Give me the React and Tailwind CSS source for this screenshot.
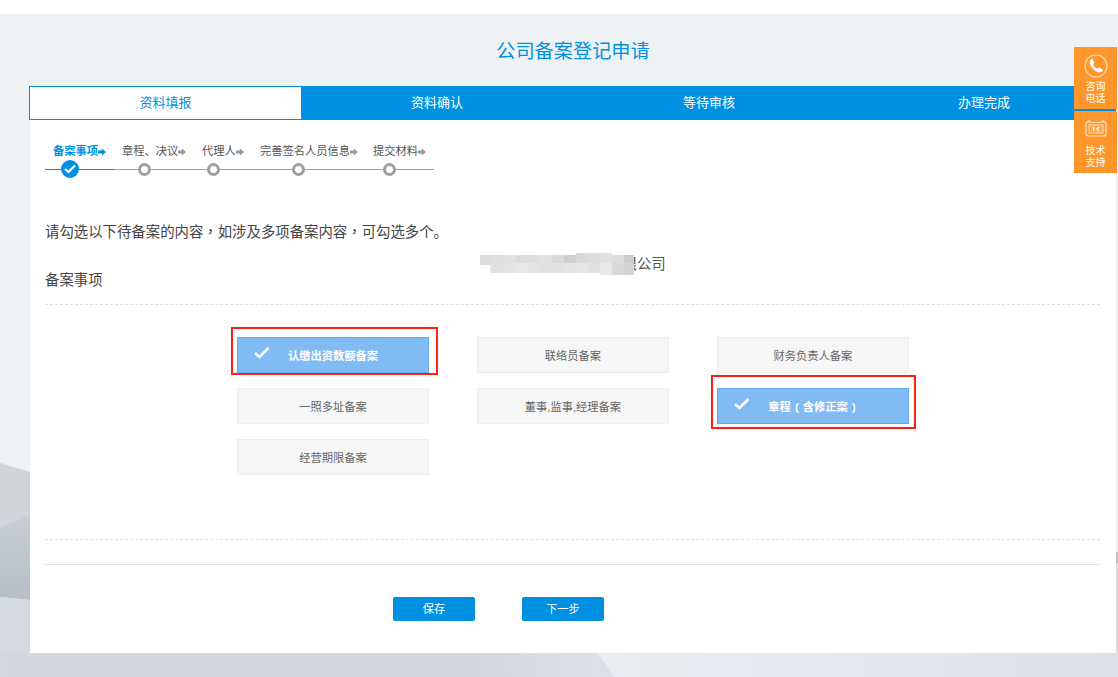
import React from "react";

const FONT = "font-['Liberation_Sans','Noto_Sans_CJK_SC',sans-serif]";

function Arrow({ active }) {
  return (
    <svg width="8" height="8" viewBox="0 0 8 8" className="shrink-0 mt-[2px]">
      <path d="M0 2.600h3.800V.6L8 4 3.800 7.400V5.400H0z" fill={active ? "#0090e2" : "#9a9a9a"} />
    </svg>
  );
}

function StepLabel({ text, active, className }) {
  return (
    <div className={`flex items-center text-[11.25px] leading-[14px] ${active ? "text-[#0090e2] font-bold" : "text-[#555]"} ${className}`}>
      {text}
      <Arrow active={active} />
    </div>
  );
}

function Node() {
  return <span className="block w-[13px] h-[13px] rounded-full border-[3px] border-[#9f9f9f] bg-white shrink-0" />;
}

function Line({ className }) {
  return <span className={`block h-px ${className}`} />;
}

function Check({ className }) {
  return (
    <svg width="16" height="12" viewBox="0 0 16 12" className={className}>
      <path d="M1 6 5.500 10 14.500 1" fill="none" stroke="#fff" strokeWidth="2.6" />
    </svg>
  );
}

function Item({ text, selected, redClass, textClass }) {
  if (selected) {
    return (
      <div className="relative flex items-center justify-center h-[36px] w-[192px] pt-[2px] bg-[#81bbf4] border border-[#62aaf0] text-[11.25px] font-bold text-white">
        <Check className="absolute left-[16px] top-[9px]" />
        <span className={textClass}>{text}</span>
        <span className={`absolute border-2 border-[#ff2015] ${redClass}`} />
      </div>
    );
  }
  return (
    <div className="flex items-center justify-center h-[36px] w-[192px] pt-[2px] bg-[#f6f6f6] border border-[#eeeeee] text-[11.25px] text-[#666]">
      {text}
    </div>
  );
}

const MOSAIC_TOP = ["#dcdcdc", "#dedede", "#e2e2e2", "#dcdcdc", "#dddddd", "#e2e2e2", "#d9d9d9", "#cfcfcf", "#d9d9d9", "#dcdcdc", "#e0e0e0", "#dcdcdc", "#cccccc"];
const MOSAIC_BOT = ["#e6e6e6", "#dfdfdf", "#e4e4e4", "#e8e8e8", "#e4e4e4", "#e0e0e0", "#e2e2e2", "#e4e4e4", "#e6e6e6", "#e0e0e0", "#e8e8e8", "#d8d8d8", "#d4d4d4"];

function Mosaic({ className }) {
  return (
    <svg width="154" height="22" viewBox="0 0 154 22" className={className}>
      {MOSAIC_TOP.map((c, i) => (
        <rect key={i} x={i * 12} y={i > 7 && i < 11 ? 0 : 2} width="12" height="10" fill={c} />
      ))}
      {MOSAIC_BOT.map((c, i) => (
        <rect key={i} x={i === 0 ? 10 : i * 12} y="10" width={i === 0 ? 2 : 12} height={i > 9 ? 12 : 10} fill={c} />
      ))}
    </svg>
  );
}

function SideButton({ icon, lines, pad }) {
  return (
    <div className={`w-[43px] h-[62px] bg-[#ff962b] flex flex-col items-center text-white text-[10px] leading-[12px] ${pad}`}>
      {icon}
      <div className="text-center">
        {lines.map((l) => (
          <div key={l}>{l}</div>
        ))}
      </div>
    </div>
  );
}

function Comma() {
  return <span className="font-['Noto_Sans_CJK_TC',sans-serif]">，</span>;
}

export default function App() {
  return (
    <div className={`relative w-[1118px] h-[677px] overflow-hidden bg-white ${FONT}`}>
      <div className="h-[14px]" />
      <div className="relative h-[663px] bg-[#eef2f5]">
        <svg className="absolute left-0 top-0" width="1118" height="663" viewBox="0 0 1118 663">
          <defs>
            <linearGradient id="band" x1="0" y1="0" x2="0" y2="1">
              <stop offset="0" stopColor="#c9ced5" />
              <stop offset="1" stopColor="#b6bdc8" />
            </linearGradient>
            <linearGradient id="floorLeft" x1="0" y1="0" x2="1" y2="0">
              <stop offset="0" stopColor="#d2d7e0" />
              <stop offset="0.75" stopColor="#d2d6df" />
              <stop offset="1" stopColor="#dde1e8" />
            </linearGradient>
            <linearGradient id="floor" x1="0" y1="0" x2="1" y2="0">
              <stop offset="0" stopColor="#e9edf1" />
              <stop offset="0.6" stopColor="#e2e6ef" />
              <stop offset="1" stopColor="#dce1e8" />
            </linearGradient>
          </defs>
          <polygon points="0,449 30,458 30,540 0,540" fill="#d0d5da" />
          <polygon points="0,514 30,501 30,586 0,583" fill="url(#band)" />
          <polygon points="0,583 30,586 30,663 0,663" fill="#d5dae2" />
          <polygon points="0,639 620,639 620,663 0,663" fill="url(#floorLeft)" />
          <polygon points="598,639 1118,639 1118,663 614,663" fill="url(#floor)" />
        </svg>

        <div className="relative flex items-center justify-center w-[1086px] ml-[30px] h-[72px] pt-[4px] text-[19.2px] text-[#0090e2]">
          公司备案登记申请
        </div>

        <div className="relative ml-[30px] w-[1086px] h-[567px] bg-white">
          <div className="flex h-[34px] -ml-px text-[13px]">
            <div className="flex items-center justify-center w-[273px] bg-white border border-[#0090e2] text-[#0090e2]">资料填报</div>
            <div className="flex items-center justify-center w-[270px] bg-[#0090e2] text-white">资料确认</div>
            <div className="flex items-center justify-center w-[274px] bg-[#0090e2] text-white">等待审核</div>
            <div className="flex items-center justify-center flex-1 pl-[6px] bg-[#0090e2] text-white">办理完成</div>
          </div>

          <div className="pl-[15px] pr-[16px]">
            <div className="flex h-[14px] mt-[24px] pl-[8px]">
              <StepLabel text="备案事项" active className="w-[69px]" />
              <StepLabel text="章程、决议" className="w-[80px]" />
              <StepLabel text="代理人" className="w-[58px]" />
              <StepLabel text="完善签名人员信息" className="w-[113px]" />
              <StepLabel text="提交材料" className="" />
            </div>

            <div className="flex items-center h-[18px] mt-[2px] w-[389px]">
              <Line className="w-[16px] bg-[#0090e2]" />
              <span className="flex items-center justify-center w-[18px] h-[18px] rounded-full bg-[#0090e2] shrink-0">
                <svg width="12" height="10" viewBox="0 0 12 10">
                  <path d="M1 5 4.500 8 11 1.500" fill="none" stroke="#fff" strokeWidth="2.2" />
                </svg>
              </span>
              <Line className="w-[35px] bg-[#0090e2]" />
              <Line className="w-[24px] bg-[#a0a0a0]" />
              <Node />
              <Line className="w-[56px] bg-[#a0a0a0]" />
              <Node />
              <Line className="w-[72px] bg-[#a0a0a0]" />
              <Node />
              <Line className="w-[78px] bg-[#a0a0a0]" />
              <Node />
              <Line className="flex-1 bg-[#a0a0a0]" />
            </div>

            <div className="mt-[43px] h-[20px] leading-[20px] text-[14.4px] text-[#444] whitespace-nowrap">
              请勾选以下待备案的内容<Comma />如涉及多项备案内容<Comma />可勾选多个。
            </div>

            <div className="flex h-[64px] border-b border-dashed border-[#e0e0e0] text-[14.4px] text-[#444]">
              <div className="mt-[29px] leading-[20px] h-[20px]">备案事项</div>
              <div className="relative ml-[520px] mt-[13px] h-[20px] leading-[20px] text-[#555]">
                限公司
                <Mosaic className="absolute left-[-143px] top-[-1px]" />
              </div>
            </div>

            <div className="grid grid-cols-[192px_192px_192px] gap-x-[48px] gap-y-[15px] mt-[32px] ml-[192px]">
              <Item text="认缴出资数额备案" selected redClass="left-[-7px] right-[-10px] top-[-11px] bottom-[-3px]" />
              <Item text="联络员备案" />
              <Item text="财务负责人备案" />
              <Item text="一照多址备案" />
              <Item text="董事,监事,经理备案" />
              <Item text="章程 ( 含修正案 )" selected textClass="[word-spacing:1px] mr-[2px]" redClass="left-[-7px] right-[-8px] top-[-14px] bottom-[-6px]" />
              <Item text="经营期限备案" />
            </div>

            <div className="mt-[64px] border-t border-dashed border-[#e0e0e0]" />
            <div className="mt-[24px] border-t border-[#dfe2e6]" />

            <div className="flex gap-[47px] mt-[32px] ml-[348px]">
              <button className="w-[82px] h-[24px] rounded-[2px] bg-[#0090e2] text-white text-[11.25px]">保存</button>
              <button className="w-[82px] h-[24px] rounded-[2px] bg-[#0090e2] text-white text-[11.25px]">下一步</button>
            </div>
          </div>
        </div>

        <div className="absolute left-[1116px] top-[538px] w-[2px] h-[11px] bg-[#bcbcbc]" />
        <div className="absolute left-[1116px] top-[549px] w-[2px] h-[90px] bg-[#dcdcdc]" />

        <div className="absolute left-[1074px] top-[33px] flex flex-col gap-[2px]">
          <SideButton
            pad="pt-[7px]"
            lines={["咨询", "电话"]}
            icon={
              <svg width="24" height="24" viewBox="0 0 24 24" className="mb-[3px]">
                <circle cx="12" cy="12" r="11" fill="none" stroke="#ffd9ad" strokeWidth="1.2" />
                <path d="M8.200 4.800 10.400 8.500 9.100 10.200C9.900 12.400 11.400 13.900 13.400 14.800L15.100 13.600 19 15.800C18.300 18 16.600 18.900 14.800 18.400 10.500 17.300 6.800 13.500 5.700 9.300 5.200 7.300 6 5.500 8.200 4.800Z" fill="#fff" />
              </svg>
            }
          />
          <SideButton
            pad="pt-[9px]"
            lines={["技术", "支持"]}
            icon={
              <svg width="22" height="18" viewBox="0 0 22 18" className="mb-[7px]">
                <path d="M3 1h2v1.500h12V1h2v1.500h1a1 1 0 0 1 1 1v10.500a2 2 0 0 1-2 2H3a2 2 0 0 1-2-2V3.500a1 1 0 0 1 1-1h1z" fill="none" stroke="#ffe3c4" strokeWidth="1.2" />
                <rect x="4" y="5" width="14" height="8" fill="#ffa94d" stroke="#ffd9ad" strokeWidth="1" />
                <path d="M8.500 7v4M14 7l-2 2 2 2" fill="none" stroke="#fff" strokeWidth="1.2" />
              </svg>
            }
          />
        </div>
      </div>
    </div>
  );
}
